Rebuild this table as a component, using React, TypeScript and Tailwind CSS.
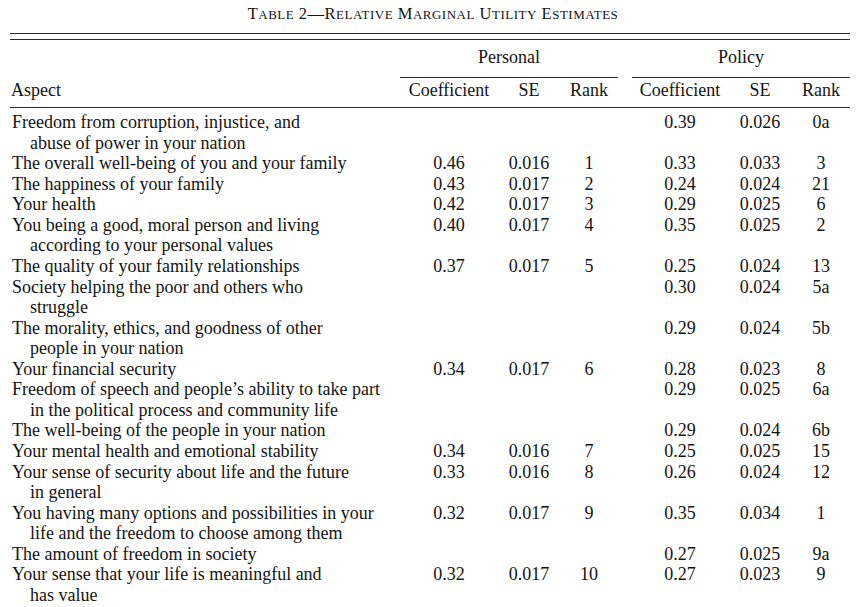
const rows: { a: string[]; p: string[]; q: string[] }[] = [
  { a: ["Freedom from corruption, injustice, and", "abuse of power in your nation"], p: ["", "", ""], q: ["0.39", "0.026", "0a"] },
  { a: ["The overall well-being of you and your family"], p: ["0.46", "0.016", "1"], q: ["0.33", "0.033", "3"] },
  { a: ["The happiness of your family"], p: ["0.43", "0.017", "2"], q: ["0.24", "0.024", "21"] },
  { a: ["Your health"], p: ["0.42", "0.017", "3"], q: ["0.29", "0.025", "6"] },
  { a: ["You being a good, moral person and living", "according to your personal values"], p: ["0.40", "0.017", "4"], q: ["0.35", "0.025", "2"] },
  { a: ["The quality of your family relationships"], p: ["0.37", "0.017", "5"], q: ["0.25", "0.024", "13"] },
  { a: ["Society helping the poor and others who", "struggle"], p: ["", "", ""], q: ["0.30", "0.024", "5a"] },
  { a: ["The morality, ethics, and goodness of other", "people in your nation"], p: ["", "", ""], q: ["0.29", "0.024", "5b"] },
  { a: ["Your financial security"], p: ["0.34", "0.017", "6"], q: ["0.28", "0.023", "8"] },
  { a: ["Freedom of speech and people\u2019s ability to take part", "in the political process and community life"], p: ["", "", ""], q: ["0.29", "0.025", "6a"] },
  { a: ["The well-being of the people in your nation"], p: ["", "", ""], q: ["0.29", "0.024", "6b"] },
  { a: ["Your mental health and emotional stability"], p: ["0.34", "0.016", "7"], q: ["0.25", "0.025", "15"] },
  { a: ["Your sense of security about life and the future", "in general"], p: ["0.33", "0.016", "8"], q: ["0.26", "0.024", "12"] },
  { a: ["You having many options and possibilities in your", "life and the freedom to choose among them"], p: ["0.32", "0.017", "9"], q: ["0.35", "0.034", "1"] },
  { a: ["The amount of freedom in society"], p: ["", "", ""], q: ["0.27", "0.025", "9a"] },
  { a: ["Your sense that your life is meaningful and", "has value"], p: ["0.32", "0.017", "10"], q: ["0.27", "0.023", "9"] },
];

const cols = "grid grid-cols-[390px_98px_62px_58px_14px_96px_64px_58px]";

// hand-made small caps: lowercase letters set as smaller capitals
function SmallCaps({ text }: { text: string }) {
  return (
    <>
      {text.split("").map((ch, i) =>
        ch >= "a" && ch <= "z" ? (
          <span key={i} className="text-[13px]">{ch.toUpperCase()}</span>
        ) : (
          <span key={i}>{ch}</span>
        )
      )}
    </>
  );
}

export default function App() {
  return (
    <div className="w-[866px] h-[607px] overflow-hidden bg-white text-[#141414] font-['Liberation_Serif',serif]">
      {/* title */}
      <div className="pt-[4px] h-[33px] text-center text-[16.5px] leading-[20px] tracking-[0.5px]">
        <SmallCaps text="Table 2—Relative Marginal Utility Estimates" />
      </div>

      <div className="ml-[10px] w-[840px]">
        <div className="h-px bg-[#2a2a2a]" />
        <div className="mt-[5px] h-px bg-[#2a2a2a]" />

        {/* group headers */}
        <div className={`${cols} mt-[7px] text-[18px] leading-[20px]`}>
          <div />
          <div className="col-span-3 border-b border-[#2a2a2a] pb-[10px] text-center">Personal</div>
          <div />
          <div className="col-span-3 border-b border-[#2a2a2a] pb-[10px] text-center">Policy</div>
        </div>

        {/* column headers */}
        <div className={`${cols} mt-[2px] text-[18px] leading-[20px] pb-[7px] border-b border-[#2a2a2a]`}>
          <div className="pl-[1px]">Aspect</div>
          <div className="text-center">Coefficient</div>
          <div className="text-center">SE</div>
          <div className="text-center">Rank</div>
          <div />
          <div className="text-center">Coefficient</div>
          <div className="text-center">SE</div>
          <div className="text-center">Rank</div>
        </div>

        {/* body */}
        <div className="pt-[4px] text-[18px] leading-[20.56px]">
          {rows.map((r, i) => (
            <div key={i} className={cols}>
              <div className="pl-[2px]">
                {r.a.map((line, j) => (
                  <div key={j} className={j > 0 ? "pl-[18px] whitespace-nowrap" : "whitespace-nowrap"}>
                    {line}
                  </div>
                ))}
              </div>
              {r.p.map((v, j) => (
                <div key={"p" + j} className="text-center">{v}</div>
              ))}
              <div />
              {r.q.map((v, j) => (
                <div key={"q" + j} className="text-center">{v}</div>
              ))}
            </div>
          ))}
        </div>
      </div>
    </div>
  );
}
